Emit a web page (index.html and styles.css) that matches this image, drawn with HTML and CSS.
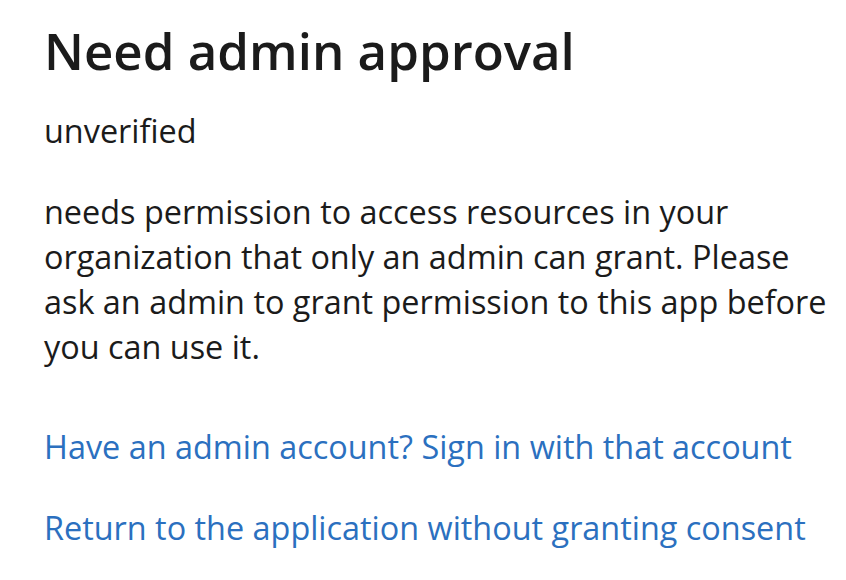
FILE: index.html
```html
<!DOCTYPE html>
<html lang="en">
<head>
  <meta charset="UTF-8">
  <meta name="viewport" content="width=device-width, initial-scale=1.0">
  <title>Need admin approval</title>
  <link rel="stylesheet" href="styles.css">
</head>
<body>
  <div class="consent">
    <h1 class="title">Need admin approval</h1>
    <div class="app-name">unverified</div>
    <p class="message">needs permission to access resources in your organization that only an admin can grant. Please ask an admin to grant permission to this app before you can use it.</p>
    <div class="links">
      <a href="#" class="link">Have an admin account? Sign in with that account</a>
      <a href="#" class="link">Return to the application without granting consent</a>
    </div>
  </div>
</body>
</html>
```

FILE: styles.css
```css
body {
  margin: 0;
  background-color: #ffffff;
  font-family: 'Open Sans', 'Noto Sans', sans-serif;
  color: #1b1b1b;
}
.consent {
  padding: 14px 0 0 44px;
  width: 785px;
  display: flex;
  flex-direction: column;
}
.title {
  margin: 0;
  font-size: 51px;
  font-weight: 600;
  line-height: 72px;
}
.app-name {
  margin-top: 24px;
  font-size: 32.4px;
  line-height: 40px;
}
.message {
  margin: 39px 0 0;
  font-size: 32.4px;
  line-height: 45px;
}
.links {
  margin-top: 55px;
  display: flex;
  flex-direction: column;
  gap: 36px;
}
.link {
  font-size: 32.4px;
  line-height: 45px;
  color: #2b70bf;
  text-decoration: none;
}
```
